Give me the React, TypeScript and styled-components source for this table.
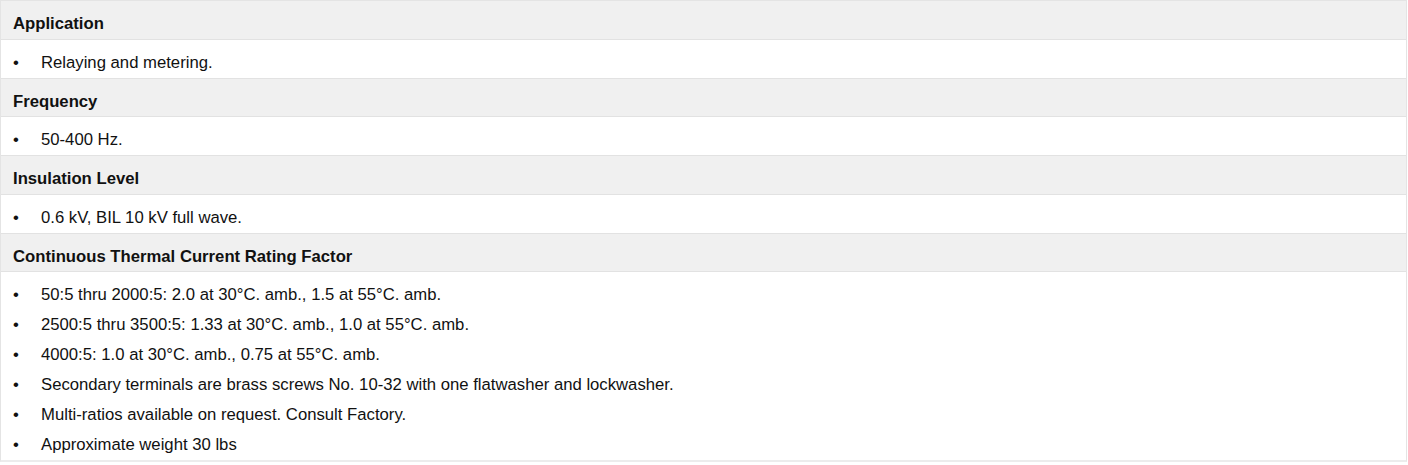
import React from "react";
import styled, { createGlobalStyle } from "styled-components";

const Global = createGlobalStyle`
  html, body { margin: 0; padding: 0; background: #fff; }
  body { font-family: "Liberation Sans", Arial, sans-serif; color: #111; }
`;

const Table = styled.div`
  width: 1407px;
  border: 1px solid #e4e4e4;
  border-bottom: 2px solid #ececec;
  box-sizing: border-box;
`;

const Heading = styled.div`
  background: #f0f0f0;
  border-bottom: 1px solid #e2e2e2;
  padding: 9px 12px 0;
  font-size: 16.7px;
  font-weight: bold;
  line-height: 28.75px;
`;

const List = styled.ul<{ $multi?: boolean }>`
  margin: 0;
  padding: ${(p) => (p.$multi ? "7.5px 12px 0" : "9px 12px 0")};
  list-style: none;
  border-bottom: ${(p) => (p.$multi ? "none" : "1px solid #e2e2e2")};
`;

const Item = styled.li<{ $multi?: boolean }>`
  display: flex;
  font-size: 16.7px;
  line-height: ${(p) => (p.$multi ? "30px" : "28.75px")};
`;

const Bullet = styled.span`
  width: 28px;
  flex: none;
`;

const sections: { title: string; items: string[] }[] = [
  { title: "Application", items: ["Relaying and metering."] },
  { title: "Frequency", items: ["50-400 Hz."] },
  { title: "Insulation Level", items: ["0.6 kV, BIL 10 kV full wave."] },
  {
    title: "Continuous Thermal Current Rating Factor",
    items: [
      "50:5 thru 2000:5: 2.0 at 30°C. amb., 1.5 at 55°C. amb.",
      "2500:5 thru 3500:5: 1.33 at 30°C. amb., 1.0 at 55°C. amb.",
      "4000:5: 1.0 at 30°C. amb., 0.75 at 55°C. amb.",
      "Secondary terminals are brass screws No. 10-32 with one flatwasher and lockwasher.",
      "Multi-ratios available on request. Consult Factory.",
      "Approximate weight 30 lbs",
    ],
  },
];

export default function App() {
  return (
    <>
      <Global />
      <Table>
        {sections.map((s) => {
          const multi = s.items.length > 1;
          return (
            <React.Fragment key={s.title}>
              <Heading>{s.title}</Heading>
              <List $multi={multi}>
                {s.items.map((t) => (
                  <Item key={t} $multi={multi}>
                    <Bullet>•</Bullet>
                    {t}
                  </Item>
                ))}
              </List>
            </React.Fragment>
          );
        })}
      </Table>
    </>
  );
}
